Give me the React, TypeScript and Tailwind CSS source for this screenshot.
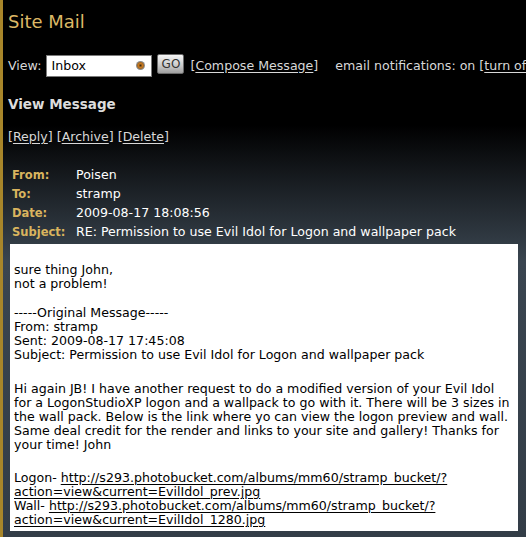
import React from 'react';

const FIELDS = [
  { label: 'From:', value: 'Poisen' },
  { label: 'To:', value: 'stramp' },
  { label: 'Date:', value: '2009-08-17 18:08:56' },
  { label: 'Subject:', value: 'RE: Permission to use Evil Idol for Logon and wallpaper pack' },
];

function Link({ children }: { children: React.ReactNode }) {
  return <span className="underline underline-offset-2">{children}</span>;
}

export default function App() {
  return (
    <div
      className="w-[526px] h-[537px] overflow-hidden border-l-[3px] border-[#a8862a] bg-[linear-gradient(to_bottom,#000_0px,#000_125px,#3a4550_262px,#333d47_537px)] text-[#d8d8d8] text-[12.6px] leading-[16px]"
      style={{ fontFamily: '"DejaVu Sans", Verdana, sans-serif' }}
    >
      <div className="pl-[5px]">
        {/* Title */}
        <div className="mt-[10px] text-[18px] leading-[24px] text-[#dcb866]">Site Mail</div>

        {/* View row */}
        <div className="mt-[20px] flex items-center h-[23px] whitespace-nowrap">
          <span className="shrink-0">View:</span>
          <div className="shrink-0 ml-[5px] w-[106px] h-[22px] bg-white border border-[#7a7a7a] flex items-center justify-between pl-[4px] pr-[6px] text-black">
            <span>Inbox</span>
            <span className="w-[9px] h-[9px] rounded-full bg-[radial-gradient(circle,#3a2a10_0px,#c97a22_2px,#a86a20_3px,#8a8a8a_4px)]" />
          </div>
          <div className="shrink-0 ml-[5px] -mt-[3px] w-[27px] h-[20px] rounded-[2px] border border-[#6a6a6a] bg-[linear-gradient(to_bottom,#f6f6f6,#c8c8c8_60%,#a0a0a0)] flex items-center justify-center text-[12px] text-[#333]">
            GO
          </div>
          <span className="shrink-0 ml-[6px]">
            [<Link>Compose Message</Link>]
          </span>
          <span className="shrink-0 ml-[17px]">
            email notifications: on [<Link>turn off</Link>]
          </span>
        </div>

        {/* Heading */}
        <div className="mt-[18px] text-[13.5px] leading-[18px] font-bold text-[#dcdcdc]">View Message</div>

        {/* Actions */}
        <div className="mt-[16px] whitespace-nowrap">
          [<Link>Reply</Link>] [<Link>Archive</Link>] [<Link>Delete</Link>]
        </div>

        {/* Header fields */}
        <div className="mt-[20px] pl-[4px]">
          {FIELDS.map((f) => (
            <div key={f.label} className="flex items-center h-[19px] whitespace-nowrap">
              <span className="w-[64px] text-[11.5px] font-bold text-[#d9b45e]">{f.label}</span>
              <span className="text-white">{f.value}</span>
            </div>
          ))}
        </div>
      </div>

      {/* Message body */}
      <div className="mt-[3px] ml-[7px] w-[508px] bg-white text-black pl-[4px] pt-[19px] pb-[4px] leading-[14px] whitespace-nowrap">
        <div>sure thing John,</div>
        <div>not a problem!</div>
        <div className="h-[15px]" />
        <div>-----Original Message-----</div>
        <div>From: stramp</div>
        <div>Sent: 2009-08-17 17:45:08</div>
        <div>Subject: Permission to use Evil Idol for Logon and wallpaper pack</div>
        <div className="h-[20px]" />
        <div>Hi again JB! I have another request to do a modified version of your Evil Idol</div>
        <div>for a LogonStudioXP logon and a wallpack to go with it. There will be 3 sizes in</div>
        <div>the wall pack. Below is the link where yo can view the logon preview and wall.</div>
        <div>Same deal credit for the render and links to your site and gallery! Thanks for</div>
        <div>your time! John</div>
        <div className="h-[19px]" />
        <div>
          Logon- <Link>http://s293.photobucket.com/albums/mm60/stramp_bucket/?</Link>
        </div>
        <div>
          <Link>action=view&amp;current=EvilIdol_prev.jpg</Link>
        </div>
        <div>
          Wall- <Link>http://s293.photobucket.com/albums/mm60/stramp_bucket/?</Link>
        </div>
        <div>
          <Link>action=view&amp;current=EvilIdol_1280.jpg</Link>
        </div>
      </div>
    </div>
  );
}
